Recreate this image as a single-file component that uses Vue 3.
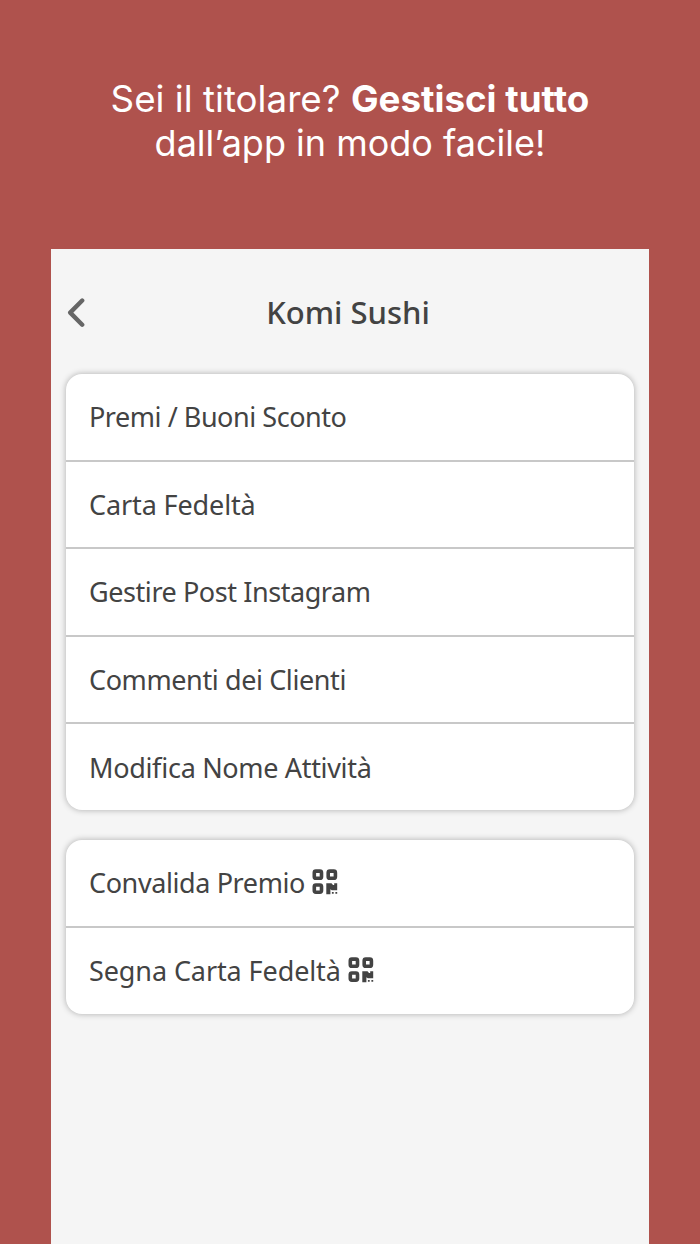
<template>
  <div class="page">
    <h1 class="headline">
      <span class="headline-first">Sei il titolare? <strong>Gestisci tutto</strong></span><br />
      dall’app in modo facile!
    </h1>

    <main class="screen">
      <header class="topbar">
        <button type="button" class="back-btn" aria-label="Indietro">
          <svg width="18" height="30" viewBox="0 0 18 30">
            <path d="M15.2 2.5 L3.2 14.6 L15.2 26.7" />
          </svg>
        </button>
        <h2 class="title">Komi Sushi</h2>
      </header>

      <ul v-for="(group, index) in groups" :key="index" class="card">
        <li v-for="item in group" :key="item.label" class="row">
          <span class="label" :style="{ letterSpacing: item.spacing + 'px' }">{{ item.label }}</span>
          <svg v-if="item.qr" class="qr" width="26" height="26" viewBox="0 0 26 26">
            <rect x="2.3" y="2.1" width="7.2" height="7.2" rx="1.6" />
            <rect x="16.2" y="2.1" width="7.2" height="7.2" rx="1.6" />
            <rect x="2.3" y="16" width="7.2" height="7.2" rx="1.6" />
            <path d="M14.3 14.3 h5.2 l1.5 1.6 h1.2 v-1.6 h3 v6.9 h-5.4 l-1.4 -1 v5.1 h-4.1 z M19.9 23 h1.8 v1.8 h-1.8 z M23.4 23 h1.8 v1.8 h-1.8 z" />
          </svg>
        </li>
      </ul>
    </main>
  </div>
</template>

<script setup>
const groups = [
  [
    { label: 'Premi / Buoni Sconto', spacing: -0.46 },
    { label: 'Carta Fedeltà', spacing: -0.12 },
    { label: 'Gestire Post Instagram', spacing: -0.43 },
    { label: 'Commenti dei Clienti', spacing: -0.4 },
    { label: 'Modifica Nome Attività', spacing: -0.33 }
  ],
  [
    { label: 'Convalida Premio', spacing: -0.4, qr: true },
    { label: 'Segna Carta Fedeltà', spacing: -0.1, qr: true }
  ]
];
</script>

<style>
body {
  margin: 0;
  background: #af524d;
}
</style>

<style scoped>
.page {
  box-sizing: border-box;
  height: 1244px;
  padding: 77px 51px 0;
  background: #af524d;
  overflow: hidden;
}

.headline {
  height: 172px;
  margin: 0;
  box-sizing: border-box;
  color: #fff;
  font-family: 'Inter', sans-serif;
  font-size: 36px;
  font-weight: 400;
  line-height: 43.5px;
  text-align: center;
  white-space: nowrap;
}

.headline-first {
  font-size: 36.75px;
}

.headline strong {
  font-weight: 700;
}

.screen {
  box-sizing: border-box;
  height: 995px;
  padding: 0 15px;
  background: #f5f5f5;
  color: #434343;
  font-family: 'Noto Sans', sans-serif;
}

.topbar {
  display: grid;
  grid-template-columns: 40px 1fr 40px;
  align-items: center;
  height: 125px;
}

.back-btn {
  display: flex;
  padding: 2px 0 0 1px;
  border: none;
  background: none;
}

.back-btn path {
  fill: none;
  stroke: #666;
  stroke-width: 4.4;
  stroke-linecap: round;
  stroke-linejoin: round;
}

.title {
  margin: 0;
  padding-right: 4px;
  font-size: 31px;
  font-weight: 500;
  text-align: center;
}

.card {
  margin: 0 0 30px;
  padding: 0;
  border-radius: 16px;
  background: #fff;
  box-shadow: 0 0 6px rgba(0, 0, 0, 0.3);
  list-style: none;
}

.row {
  display: flex;
  align-items: center;
  box-sizing: border-box;
  height: 87.5px;
  padding: 0 24px;
  border-bottom: 2px solid #c8c8c8;
  font-size: 27px;
  font-weight: 400;
  white-space: nowrap;
}

.row:last-child {
  height: 86px;
  border-bottom: none;
}

.label {
  margin-left: -1px;
  font-feature-settings: 'liga' 1;
}

.qr {
  margin: 0 0 2px 7px;
  overflow: visible;
  fill: #434343;
}

.qr rect {
  fill: none;
  stroke: #434343;
  stroke-width: 3.6;
}
</style>
